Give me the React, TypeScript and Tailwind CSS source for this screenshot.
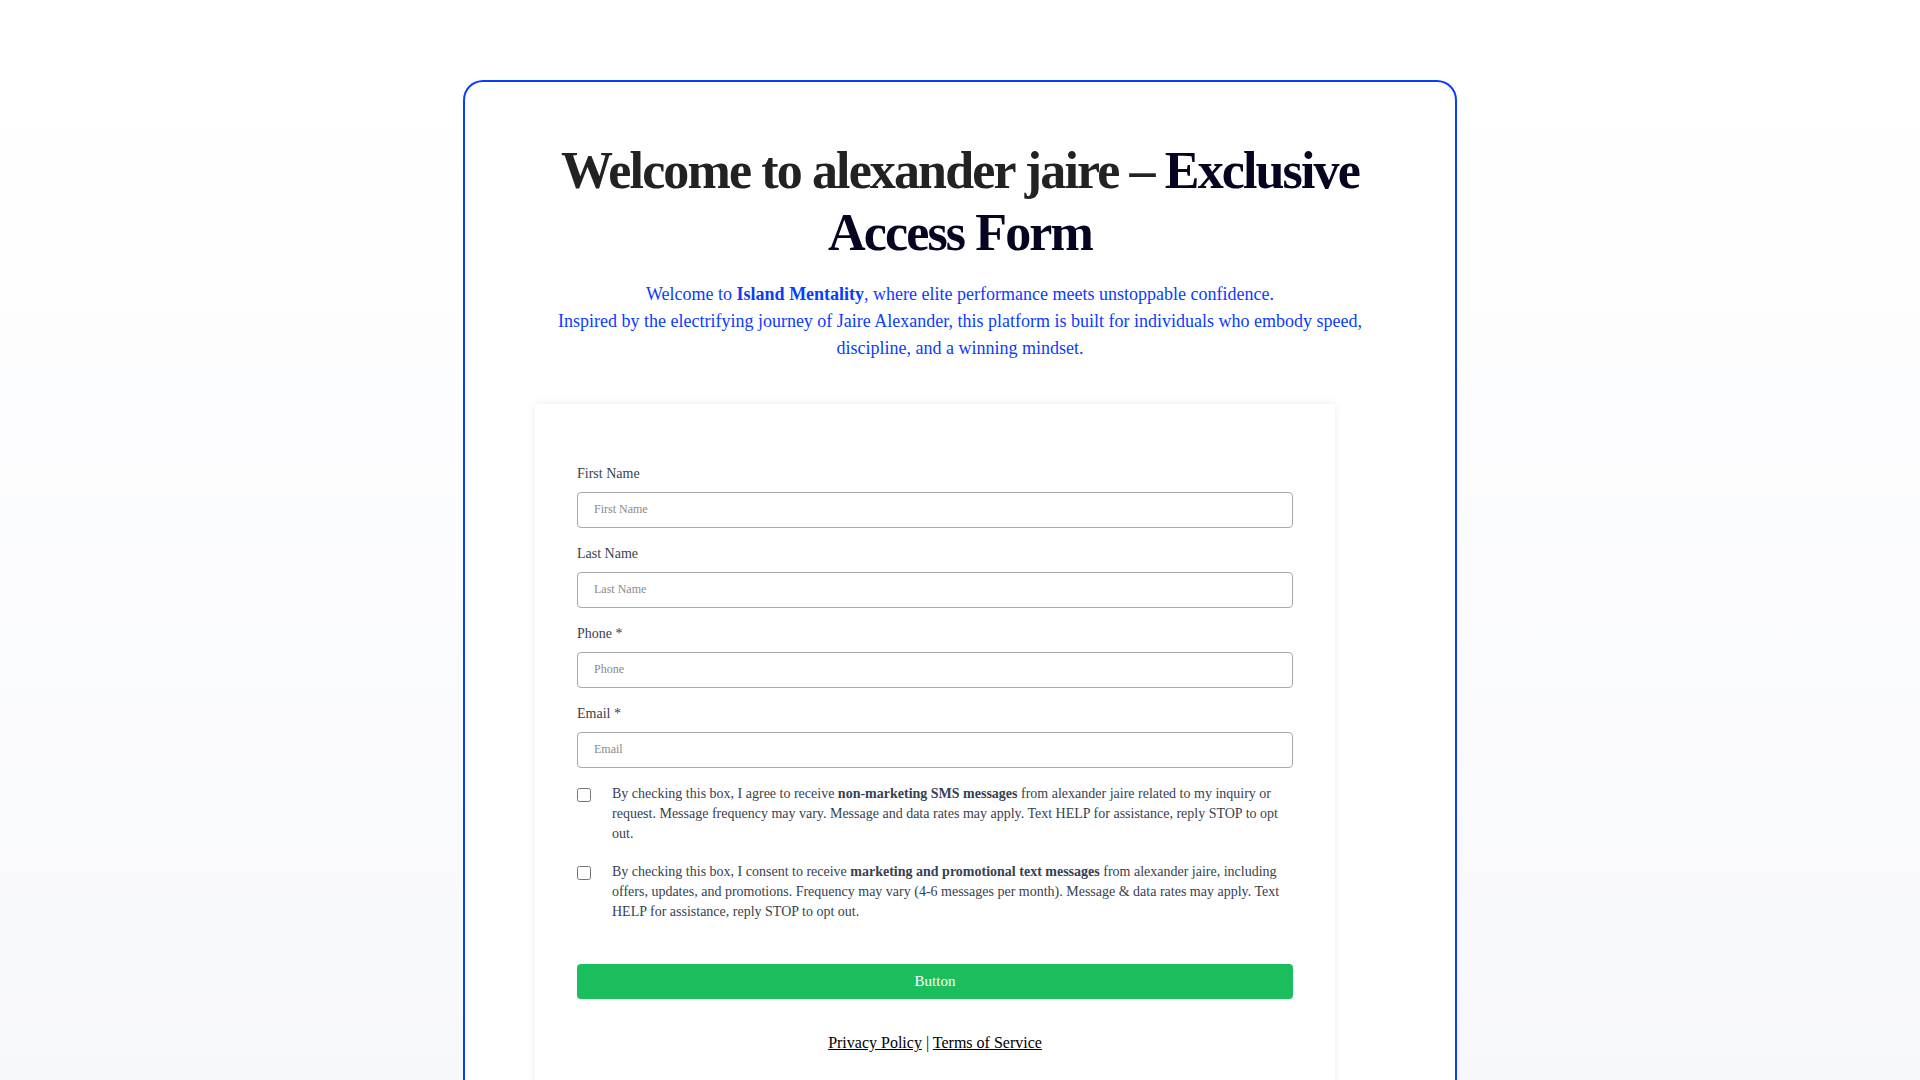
const fields = [
  { label: "First Name", placeholder: "First Name" },
  { label: "Last Name", placeholder: "Last Name" },
  { label: "Phone *", placeholder: "Phone" },
  { label: "Email *", placeholder: "Email" },
];

export default function App() {
  return (
    <div
      className="min-h-screen bg-gradient-to-b from-white from-[8%] to-[#f7f8fc] pt-[80px]"
      style={{ fontFamily: '"Liberation Serif", "Times New Roman", serif' }}
    >
      <div className="mx-auto w-[994px] rounded-t-[20px] border-2 border-b-0 border-[#0a3cff] bg-white px-[70px] pt-[58px] pb-10">
        <h1 className="-mx-[20px] text-center text-[52px] font-bold leading-[1.2] tracking-[-0.036em] text-[#222]">
          Welcome to alexander jaire – <span className="text-[#050522]">Exclusive Access Form</span>
        </h1>

        <div className="mt-[16px] text-center text-[18px] leading-[27px] text-[#0a3cff]">
          <p>
            Welcome to <strong>Island Mentality</strong>, where elite performance meets unstoppable confidence.
          </p>
          <p>
            Inspired by the electrifying journey of Jaire Alexander, this platform is built for individuals who embody
            speed, discipline, and a winning mindset.
          </p>
        </div>

        {/* form card */}
        <div className="mt-[42px] w-[800px] bg-white px-[42px] pt-[60px] pb-10 shadow-[0_0_8px_rgba(0,0,0,0.08)]">
          <div className="flex flex-col gap-4">
            {fields.map((f) => (
              <div key={f.label}>
                <label className="block text-[14px] leading-5 text-[#374151]">{f.label}</label>
                <input
                  placeholder={f.placeholder}
                  className="mt-2 block h-9 w-full rounded-[4px] border border-[#aaa] px-4 text-[12px] text-[#374151] placeholder:text-[#8a8a8a] outline-none"
                />
              </div>
            ))}
          </div>

          <div className="mt-4 flex flex-col gap-[18px] text-[14px] leading-[20px] text-[#374151]">
            <label className="flex items-start gap-[21px]">
              <input type="checkbox" className="mt-[4px] h-[14px] w-[14px] shrink-0" />
              <span>
                By checking this box, I agree to receive <strong>non-marketing SMS messages</strong> from alexander jaire
                related to my inquiry or request. Message frequency may vary. Message and data rates may apply. Text HELP
                for assistance, reply STOP to opt out.
              </span>
            </label>
            <label className="flex items-start gap-[21px]">
              <input type="checkbox" className="mt-[4px] h-[14px] w-[14px] shrink-0" />
              <span>
                By checking this box, I consent to receive <strong>marketing and promotional text messages</strong> from
                alexander jaire, including offers, updates, and promotions. Frequency may vary (4-6 messages per month).
                Message &amp; data rates may apply. Text HELP for assistance, reply STOP to opt out.
              </span>
            </label>
          </div>

          <button className="mt-[42px] block h-[35px] w-full rounded-[4px] bg-[#1bbe5c] text-[15px] text-white">
            Button
          </button>

          <p className="mt-[32px] text-center text-[16px] leading-6 text-black">
            <a href="#" className="underline">
              Privacy Policy
            </a>{" "}
            |{" "}
            <a href="#" className="underline">
              Terms of Service
            </a>
          </p>
        </div>
      </div>
    </div>
  );
}
